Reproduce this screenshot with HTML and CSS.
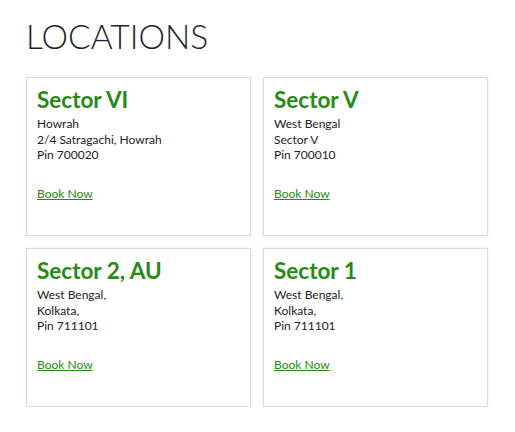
FILE: index.html
```html
<!DOCTYPE html>
<html>
<head>
<meta charset="utf-8">
<link rel="stylesheet" href="styles.css">
</head>
<body>
<div class="page">
  <h1 class="heading">LOCATIONS</h1>
  <div class="grid">
    <div class="card">
      <h2 class="title">Sector VI</h2>
      <p class="addr">Howrah<br>2/4 Satragachi, Howrah<br>Pin 700020</p>
      <a class="book" href="#">Book Now</a>
    </div>
    <div class="card">
      <h2 class="title">Sector V</h2>
      <p class="addr">West Bengal<br>Sector V<br>Pin 700010</p>
      <a class="book" href="#">Book Now</a>
    </div>
    <div class="card">
      <h2 class="title">Sector 2, AU</h2>
      <p class="addr">West Bengal,<br>Kolkata,<br>Pin 711101</p>
      <a class="book" href="#">Book Now</a>
    </div>
    <div class="card">
      <h2 class="title">Sector 1</h2>
      <p class="addr">West Bengal,<br>Kolkata,<br>Pin 711101</p>
      <a class="book" href="#">Book Now</a>
    </div>
  </div>
</div>
</body>
</html>
```
FILE: styles.css
```css
html, body {
  margin: 0;
  padding: 0;
  background: #fff;
}
body {
  font-family: Lato, "Open Sans", sans-serif;
  color: #222;
}
.page {
  padding: 16px 27px 0 26px;
}
.heading {
  margin: 0;
  font-size: 33.5px;
  font-weight: 300;
  line-height: 40px;
  color: #1f1f2a;
}
.grid {
  margin-top: 21px;
  display: grid;
  grid-template-columns: 225px 225px;
  column-gap: 12px;
  row-gap: 12px;
}
.card {
  box-sizing: border-box;
  height: 159px;
  border: 1px solid #dcdcdc;
  box-shadow: 0 0 4px rgba(0, 0, 0, 0.08);
  padding: 8px 10px;
  display: flex;
  flex-direction: column;
  align-items: flex-start;
}
.title {
  margin: 0;
  font-size: 22.5px;
  font-weight: 700;
  line-height: 28px;
  color: #268a14;
}
.addr {
  margin: 2px 0 0;
  font-size: 12px;
  line-height: 15.5px;
  color: #222;
}
.book {
  margin-top: 23px;
  font-size: 12px;
  line-height: 15.5px;
  color: #268a14;
  text-decoration: underline;
}
```
